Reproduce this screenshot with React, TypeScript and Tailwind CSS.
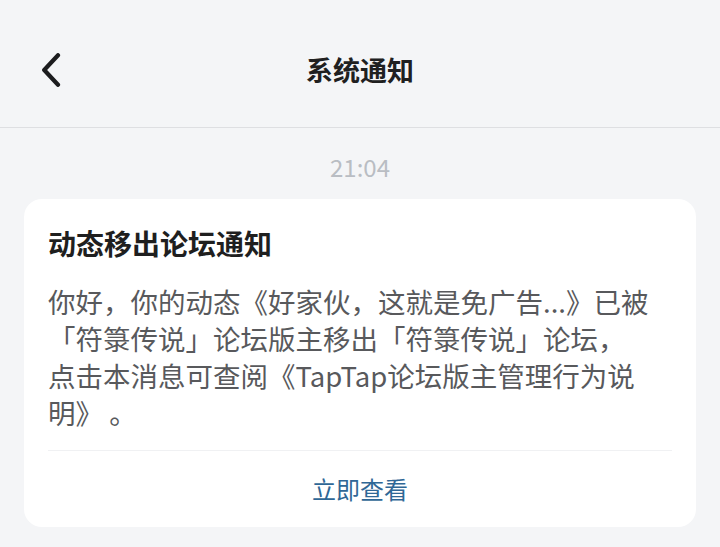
import { useState } from 'react'

const cjk = { fontFamily: '"Noto Sans CJK SC", "Noto Sans", sans-serif' }

function BackIcon() {
  return (
    <svg width="20" height="34" viewBox="0 0 20 34" fill="none">
      <path d="M17 2.2 L3.2 17 L17 31.8" stroke="#1c1c1e" strokeWidth="4.2" strokeLinecap="round" strokeLinejoin="round" />
    </svg>
  )
}

export default function App() {
  const [notice] = useState({
    time: '21:04',
    title: '动态移出论坛通知',
    lines: [
      '你好，你的动态《好家伙，这就是免广告...》已被',
      '「符箓传说」论坛版主移出「符箓传说」论坛，',
      '点击本消息可查阅《TapTap论坛版主管理行为说',
      '明》 。',
    ],
    action: '立即查看',
  })

  return (
    <div className="w-[720px] h-[547px] bg-[#f4f5f7] overflow-hidden" style={cjk}>
      {/* 顶部导航 */}
      <div className="h-[128px] flex items-center border-b border-[#dedfe2] pt-[13px]">
        <div className="w-[120px] pl-[41px] flex items-center">
          <BackIcon />
        </div>
        <div className="flex-1 text-center text-[27px] leading-[36px] font-bold text-[#202020]">系统通知</div>
        <div className="w-[120px]" />
      </div>

      <div className="pt-[23px] text-center text-[24px] leading-[32px] text-[#b9bdc3]">{notice.time}</div>

      <div className="mx-[24px] mt-[16px] bg-white rounded-[18px] px-[24px]">
        <div className="pt-[26px] text-[28px] leading-[36px] font-bold text-[#1f1f1f]">{notice.title}</div>
        <div className="mt-[22px] text-[27.5px] leading-[37px] text-[#58595c] whitespace-nowrap">
          {notice.lines.map((line, i) => (
            <div key={i}>{line}</div>
          ))}
        </div>
        <div className="mt-[19px] border-t border-[#f0f1f3]" />
        <div className="h-[76px] flex items-center justify-center text-[24px] text-[#2f6796]">{notice.action}</div>
      </div>
    </div>
  )
}
